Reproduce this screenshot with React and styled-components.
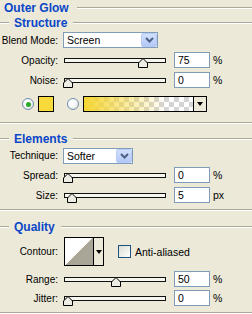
import React from 'react';
import styled, { createGlobalStyle } from 'styled-components';

const Global = createGlobalStyle`
    body {
        margin: 0;
        background: #ece9d8;
    }
`;

const Panel = styled.div`
    width: 252px;
    height: 314px;
    overflow: hidden;
    background: #ece9d8;
    font-family: 'Liberation Sans', Arial, sans-serif;
    font-size: 10px;
    color: #000;
`;

const Header = styled.div`
    display: flex;
    align-items: center;
    height: 15px;
    margin-top: ${(p) => p.$mt || 0}px;
    padding-left: ${(p) => p.$pl || 0}px;
`;

const Title = styled.span`
    font-weight: bold;
    font-size: 12px;
    color: #0a46c8;
    white-space: nowrap;
    margin: 0 ${(p) => p.$after}px 0 ${(p) => p.$before}px;
`;

const Rule = styled.div`
    flex: ${(p) => (p.$w ? 'none' : 1)};
    width: ${(p) => (p.$w ? `${p.$w}px` : 'auto')};
    height: 0;
    border-top: 1px solid #aca899;
    border-bottom: 1px solid #fff;
`;

const Separator = styled.div`
    height: 0;
    margin-top: ${(p) => p.$mt}px;
    border-top: 1px solid #aca899;
    border-bottom: 1px solid #fff;
`;

const Row = styled.div`
    display: flex;
    align-items: center;
    height: ${(p) => p.$h}px;
    padding-left: ${(p) => p.$pl || 0}px;
`;

const Label = styled.div`
    flex: none;
    width: 58px;
    text-align: right;
    white-space: nowrap;
`;

const Select = styled.div`
    box-sizing: border-box;
    display: flex;
    align-items: center;
    justify-content: space-between;
    margin-left: 5px;
    width: ${(p) => p.$w}px;
    height: 16px;
    padding-left: 3px;
    border: 1px solid #7f9db9;
    background: #fff;
    font-size: 10.5px;
`;

const SelectButton = styled.div`
    box-sizing: border-box;
    display: flex;
    align-items: center;
    justify-content: center;
    width: 16px;
    height: 14px;
    border: 1px solid #b8cbf7;
    border-radius: 2px;
    background: linear-gradient(#d2e0fd, #b3c8f5);
`;

const SliderWrap = styled.div`
    position: relative;
    flex: none;
    margin-left: 5px;
    width: 104px;
    height: 5px;
`;

const Track = styled.div`
    box-sizing: border-box;
    margin-left: 1px;
    width: 102px;
    height: 5px;
    border: 1px solid #111;
    background: #f6f5ee;
`;

const Thumb = styled.svg`
    position: absolute;
    top: 0;
    width: 10px;
    height: 10px;
`;

const ValueBox = styled.div`
    box-sizing: border-box;
    display: flex;
    align-items: center;
    margin-left: 7px;
    width: 36px;
    height: 16px;
    padding-left: 3px;
    border: 1px solid #7f9db9;
    background: #fff;
    font-size: 10.5px;
`;

const Unit = styled.span`
    margin-left: 3px;
    font-size: 10.5px;
`;

const Radio = styled.div`
    box-sizing: border-box;
    position: relative;
    flex: none;
    margin-left: ${(p) => p.$ml || 0}px;
    width: 12px;
    height: 12px;
    border-radius: 50%;
    border: 1px solid #6f8fb2;
    background: radial-gradient(circle at 40% 35%, #fff 30%, #d8d8d0);

    &::after {
        content: '';
        display: ${(p) => (p.$on ? 'block' : 'none')};
        position: absolute;
        left: 2.5px;
        top: 2.5px;
        width: 5px;
        height: 5px;
        border-radius: 50%;
        background: #2ca82c;
    }
`;

const Swatch = styled.div`
    box-sizing: border-box;
    margin-left: 4px;
    width: 16px;
    height: 16px;
    border: 1px solid #000;
    background: #f8da3a;
`;

const GradientBox = styled.div`
    box-sizing: border-box;
    display: flex;
    margin-left: 4px;
    width: 124px;
    height: 16px;
    border: 1px solid #000;
`;

const GradientFill = styled.div`
    flex: 1;
    background:
        linear-gradient(to right, rgba(246, 214, 52, 1), rgba(246, 214, 52, 0) 75%),
        conic-gradient(#fff 25%, #d4d4d4 0 50%, #fff 0 75%, #d4d4d4 0) 0 0 / 10px 10px;
`;

const DropArrow = styled.div`
    display: flex;
    align-items: center;
    justify-content: center;
    flex: none;
    width: ${(p) => p.$w}px;
    border-left: 1px solid #000;
    background: #ece9d8;

    &::after {
        content: '';
        border-left: 3px solid transparent;
        border-right: 3px solid transparent;
        border-top: 4px solid #000;
    }
`;

const ContourBox = styled.div`
    box-sizing: border-box;
    display: flex;
    margin-left: 6px;
    width: 40px;
    height: 29px;
    border: 1px solid #000;
`;

const ContourPreview = styled.div`
    flex: 1;
    background: linear-gradient(to bottom right, #fff 50%, #a9a597 50%);
`;

const Checkbox = styled.div`
    box-sizing: border-box;
    margin-left: 14px;
    width: 13px;
    height: 13px;
    border: 1px solid #1c5180;
    background: linear-gradient(135deg, #dcdcd4, #fff);
`;

const CheckLabel = styled.span`
    margin-left: 4px;
    font-size: 10.5px;
`;

function Chevron() {
    return (
        <svg width="9" height="6" viewBox="0 0 9 6">
            <path d="M1 1 L4.5 4.5 L8 1" fill="none" stroke="#4d6185" strokeWidth="2" />
        </svg>
    );
}

function Dropdown({ w, value }) {
    return (
        <Select $w={w}>
            {value}
            <SelectButton>
                <Chevron />
            </SelectButton>
        </Select>
    );
}

function Slider({ label, value, unit = '%', pos, h = 20 }) {
    return (
        <Row $h={h}>
            <Label>{label}</Label>
            <SliderWrap>
                <Track />
                <Thumb viewBox="0 0 10 10" style={{ left: Math.round(pos * 96) }}>
                    <path d="M0.5 9.5 V5 L5 0.5 L9.5 5 V9.5 Z" fill="#eeede4" stroke="#000" />
                </Thumb>
            </SliderWrap>
            <ValueBox>{value}</ValueBox>
            <Unit>{unit}</Unit>
        </Row>
    );
}

export default function App() {
    return (
        <Panel>
            <Global />
            <Header $pl={4}>
                <Title $before={0} $after={8}>Outer Glow</Title>
                <Rule />
            </Header>
            <Header>
                <Rule $w={9} />
                <Title $before={5} $after={6}>Structure</Title>
                <Rule />
            </Header>
            <Row $h={20}>
                <Label>Blend Mode:</Label>
                <Dropdown w={95} value="Screen" />
            </Row>
            <Slider label="Opacity:" value="75" pos={0.78} />
            <Slider label="Noise:" value="0" pos={0} />
            <Row $h={28} $pl={22}>
                <Radio $on />
                <Swatch />
                <Radio $ml={13} />
                <GradientBox>
                    <GradientFill />
                    <DropArrow $w={12} />
                </GradientBox>
            </Row>
            <Separator $mt={4} />

            <Header $mt={7}>
                <Rule $w={9} />
                <Title $before={5} $after={6}>Elements</Title>
                <Rule />
            </Header>
            <Row $h={19}>
                <Label>Technique:</Label>
                <Dropdown w={70} value="Softer" />
            </Row>
            <Slider label="Spread:" value="0" pos={0} />
            <Slider label="Size:" value="5" unit="px" pos={0.04} />
            <Separator $mt={4} />

            <Header $mt={8}>
                <Rule $w={9} />
                <Title $before={5} $after={6}>Quality</Title>
                <Rule />
            </Header>
            <Row $h={35}>
                <Label>Contour:</Label>
                <ContourBox>
                    <ContourPreview />
                    <DropArrow $w={9} />
                </ContourBox>
                <Checkbox />
                <CheckLabel>Anti-aliased</CheckLabel>
            </Row>
            <Slider label="Range:" value="50" pos={0.5} />
            <Slider label="Jitter:" value="0" pos={0} h={18} />
            <Separator $mt={5} />
        </Panel>
    );
}
